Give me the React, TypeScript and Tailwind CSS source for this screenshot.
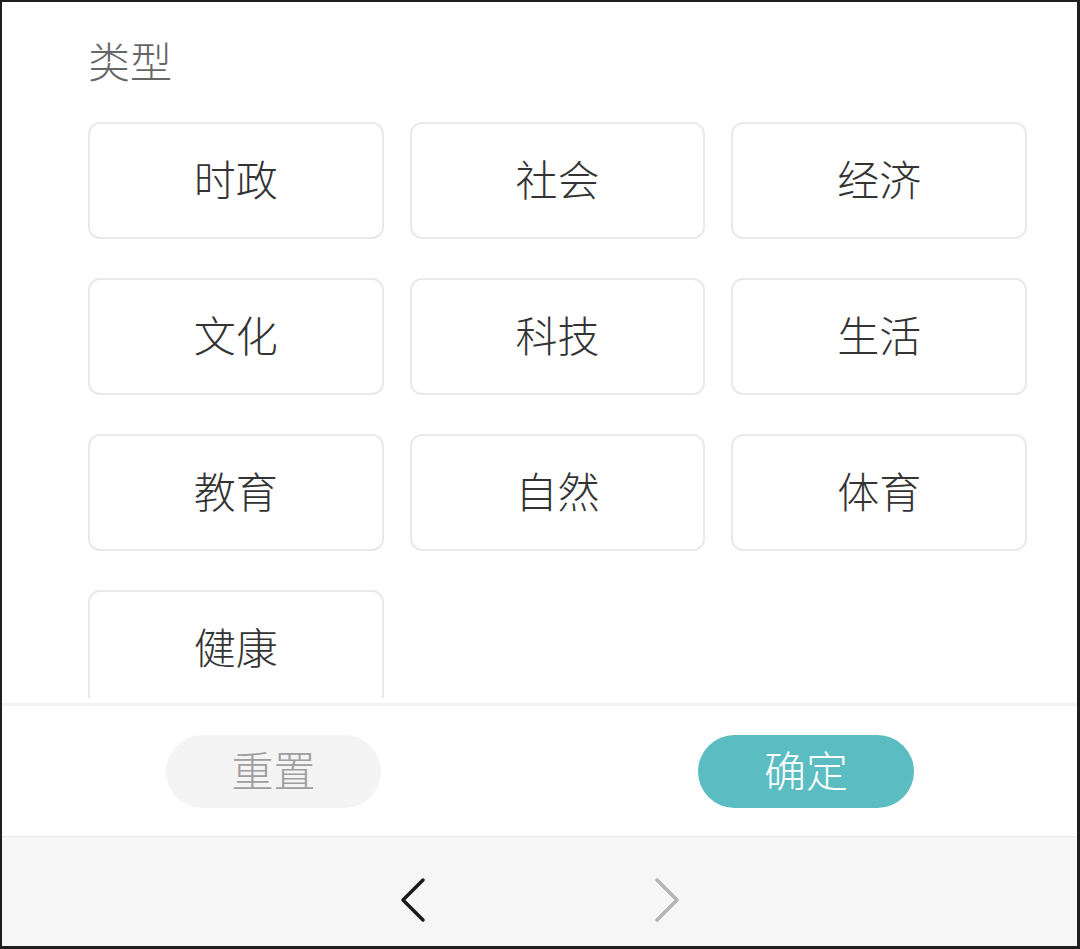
import React from "react";

const types = ["时政", "社会", "经济", "文化", "科技", "生活", "教育", "自然", "体育", "健康"];

const font = { fontFamily: '"Noto Sans CJK SC", "Noto Sans", sans-serif' };

export default function App() {
  return (
    <div
      className="w-[1080px] h-[949px] bg-[#1e1e1e] pt-[2px] pl-[2px] pr-[3px] pb-[3px]"
      style={font}
    >
      <div className="h-full flex flex-col bg-white font-light">
        {/* filter body */}
        <div className="h-[696px] overflow-hidden pl-[86px] pr-[50px] pt-[37px]">
          <div className="text-[42px] leading-none text-[#666666]">类型</div>
          <div className="mt-[41px] grid grid-cols-3 gap-x-[26px] gap-y-[39px]">
            {types.map((t) => (
              <button
                key={t}
                className="h-[117px] pb-[5px] rounded-[12px] border-2 border-[#e9e9e9] bg-white text-[42px] leading-none text-[#333333] flex items-center justify-center"
              >
                {t}
              </button>
            ))}
          </div>
        </div>

        <div className="h-[5px]" />
        <div className="h-[3px] bg-[#f1f1f1]" />

        {/* actions */}
        <div className="h-[130px] flex items-center pl-[164px] gap-[317px]">
          <button className="w-[215px] h-[73px] pb-[4px] rounded-full bg-[#f4f4f4] text-[42px] leading-none text-[#9e9e9e] flex items-center justify-center">
            重置
          </button>
          <button className="w-[216px] h-[73px] pb-[4px] rounded-full bg-[#5bbdc1] text-[42px] leading-none text-white flex items-center justify-center">
            确定
          </button>
        </div>

        {/* browser nav */}
        <div className="flex-1 bg-[#f6f6f6] border-t border-[#e9e9e9] flex items-start justify-center gap-[228px] pt-[40px]">
          <svg width="26" height="46" viewBox="0 0 26 46" fill="none">
            <path d="M23 3 L3 23 L23 43" stroke="#1a1a1a" strokeWidth="3.5" strokeLinecap="round" strokeLinejoin="round" />
          </svg>
          <svg width="26" height="46" viewBox="0 0 26 46" fill="none">
            <path d="M3 3 L23 23 L3 43" stroke="#b3b3b3" strokeWidth="3.5" strokeLinecap="round" strokeLinejoin="round" />
          </svg>
        </div>
      </div>
    </div>
  );
}
